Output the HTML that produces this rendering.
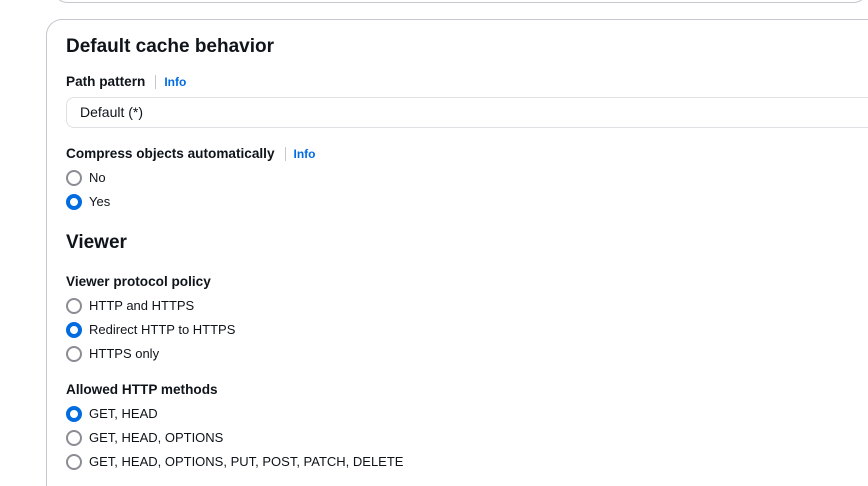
<!DOCTYPE html>
<html><head><style>
html,body{margin:0;width:868px;height:486px;overflow:hidden}
body{background:#fff;font-family:"Liberation Sans",Arial,sans-serif;color:#0f141a;position:relative}
.prev{position:absolute;left:52px;top:-30px;width:815px;height:31px;border:1px solid #c6c6cd;border-radius:16px}
.card{position:absolute;left:46px;top:19px;width:840px;height:466px;border:1px solid #c6c6cd;border-bottom:none;border-right:none;border-radius:16px 0 0 0}
.a{position:absolute;white-space:nowrap}
h1{position:absolute;margin:0;font-size:19px;font-weight:bold;left:66px;white-space:nowrap}
.lbl{font-size:13.6px;font-weight:bold}
.info{font-size:12px;font-weight:bold;color:#006ce0;border-left:1px solid #c6c6cd;padding-left:8px;margin-left:10px}
.inp{position:absolute;left:66px;top:97px;width:820px;height:29px;border:1px solid #e0e0e4;border-right:none;border-radius:8px 0 0 8px}
.r{position:absolute;left:66px;font-size:13px;height:16px;line-height:16px;white-space:nowrap;width:600px}
.r i{position:absolute;left:0;top:0;width:12px;height:12px;border:2px solid #8c8c94;border-radius:50%}
.r.on i{border:4px solid #006ce0;width:8px;height:8px;background:#fff}
.r span{position:absolute;left:23px;top:0;white-space:nowrap}
</style></head><body>
<div class="prev"></div>
<div class="card"></div>
<h1 style="top:36px">Default cache behavior</h1>
<div class="a lbl" style="left:66px;top:74px">Path pattern<span class="info">Info</span></div>
<div class="inp"></div>
<div class="a" style="left:80px;top:104px;font-size:14px">Default (*)</div>
<div class="a lbl" style="left:66px;top:146px">Compress objects automatically<span class="info">Info</span></div>
<div class="r" style="top:170px"><i></i><span>No</span></div>
<div class="r on" style="top:194px"><i></i><span>Yes</span></div>
<h1 style="top:232px;font-size:19px">Viewer</h1>
<div class="a lbl" style="left:66px;top:274px">Viewer protocol policy</div>
<div class="r" style="top:298px"><i></i><span>HTTP and HTTPS</span></div>
<div class="r on" style="top:322px"><i></i><span>Redirect HTTP to HTTPS</span></div>
<div class="r" style="top:346px"><i></i><span>HTTPS only</span></div>
<div class="a lbl" style="left:66px;top:382px">Allowed HTTP methods</div>
<div class="r on" style="top:406px"><i></i><span>GET, HEAD</span></div>
<div class="r" style="top:430px"><i></i><span>GET, HEAD, OPTIONS</span></div>
<div class="r" style="top:454px"><i></i><span>GET, HEAD, OPTIONS, PUT, POST, PATCH, DELETE</span></div>
</body></html>
